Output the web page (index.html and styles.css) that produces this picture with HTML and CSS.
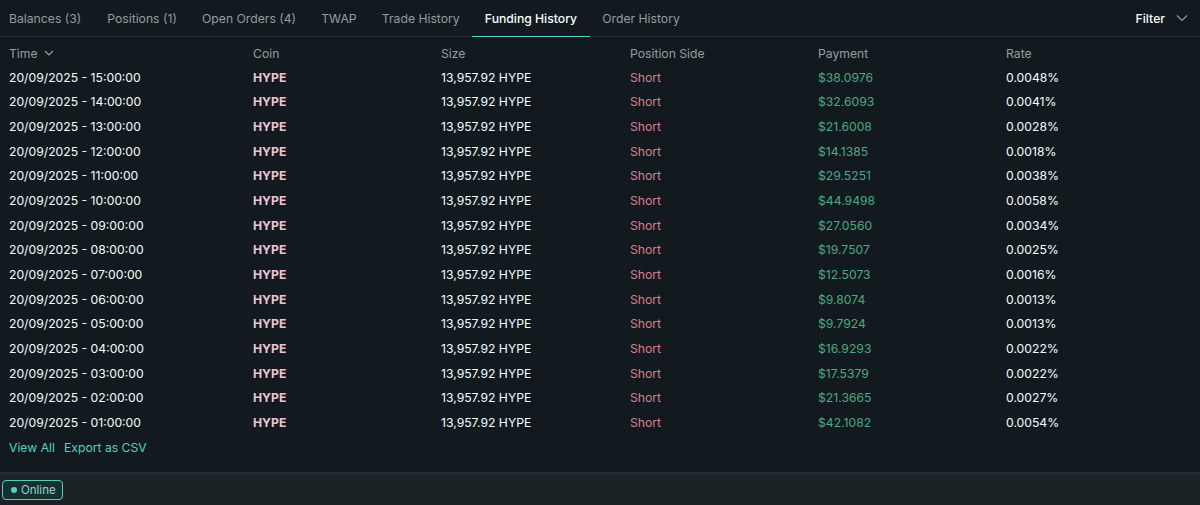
FILE: index.html
```html
<!DOCTYPE html>
<html>
<head>
<meta charset="utf-8">
<link rel="stylesheet" href="styles.css">
</head>
<body>
<div class="panel">
  <div class="tabs">
    <div class="tab">Balances (3)</div>
    <div class="tab">Positions (1)</div>
    <div class="tab">Open Orders (4)</div>
    <div class="tab">TWAP</div>
    <div class="tab">Trade History</div>
    <div class="tab active">Funding History</div>
    <div class="tab">Order History</div>
    <div class="spacer"></div>
    <div class="filter">Filter <svg class="chev" width="12" height="8" viewBox="0 0 12 8"><path d="M1 1.5 L6 6.5 L11 1.5" fill="none" stroke="#949e9c" stroke-width="1.1"/></svg></div>
  </div>
  <div class="table">
    <div class="row head">
      <div>Time <svg class="chev small" width="10" height="6" viewBox="0 0 10 6"><path d="M1 1 L5 5 L9 1" fill="none" stroke="#949e9c" stroke-width="1.2"/></svg></div>
      <div>Coin</div><div>Size</div><div>Position Side</div><div>Payment</div><div>Rate</div>
    </div>
    <div class="row"><div>20/09/2025 - 15:00:00</div><div class="coin">HYPE</div><div>13,957.92 HYPE</div><div class="short">Short</div><div class="pay">$38.0976</div><div>0.0048%</div></div>
    <div class="row"><div>20/09/2025 - 14:00:00</div><div class="coin">HYPE</div><div>13,957.92 HYPE</div><div class="short">Short</div><div class="pay">$32.6093</div><div>0.0041%</div></div>
    <div class="row"><div>20/09/2025 - 13:00:00</div><div class="coin">HYPE</div><div>13,957.92 HYPE</div><div class="short">Short</div><div class="pay">$21.6008</div><div>0.0028%</div></div>
    <div class="row"><div>20/09/2025 - 12:00:00</div><div class="coin">HYPE</div><div>13,957.92 HYPE</div><div class="short">Short</div><div class="pay">$14.1385</div><div>0.0018%</div></div>
    <div class="row"><div>20/09/2025 - 11:00:00</div><div class="coin">HYPE</div><div>13,957.92 HYPE</div><div class="short">Short</div><div class="pay">$29.5251</div><div>0.0038%</div></div>
    <div class="row"><div>20/09/2025 - 10:00:00</div><div class="coin">HYPE</div><div>13,957.92 HYPE</div><div class="short">Short</div><div class="pay">$44.9498</div><div>0.0058%</div></div>
    <div class="row"><div>20/09/2025 - 09:00:00</div><div class="coin">HYPE</div><div>13,957.92 HYPE</div><div class="short">Short</div><div class="pay">$27.0560</div><div>0.0034%</div></div>
    <div class="row"><div>20/09/2025 - 08:00:00</div><div class="coin">HYPE</div><div>13,957.92 HYPE</div><div class="short">Short</div><div class="pay">$19.7507</div><div>0.0025%</div></div>
    <div class="row"><div>20/09/2025 - 07:00:00</div><div class="coin">HYPE</div><div>13,957.92 HYPE</div><div class="short">Short</div><div class="pay">$12.5073</div><div>0.0016%</div></div>
    <div class="row"><div>20/09/2025 - 06:00:00</div><div class="coin">HYPE</div><div>13,957.92 HYPE</div><div class="short">Short</div><div class="pay">$9.8074</div><div>0.0013%</div></div>
    <div class="row"><div>20/09/2025 - 05:00:00</div><div class="coin">HYPE</div><div>13,957.92 HYPE</div><div class="short">Short</div><div class="pay">$9.7924</div><div>0.0013%</div></div>
    <div class="row"><div>20/09/2025 - 04:00:00</div><div class="coin">HYPE</div><div>13,957.92 HYPE</div><div class="short">Short</div><div class="pay">$16.9293</div><div>0.0022%</div></div>
    <div class="row"><div>20/09/2025 - 03:00:00</div><div class="coin">HYPE</div><div>13,957.92 HYPE</div><div class="short">Short</div><div class="pay">$17.5379</div><div>0.0022%</div></div>
    <div class="row"><div>20/09/2025 - 02:00:00</div><div class="coin">HYPE</div><div>13,957.92 HYPE</div><div class="short">Short</div><div class="pay">$21.3665</div><div>0.0027%</div></div>
    <div class="row"><div>20/09/2025 - 01:00:00</div><div class="coin">HYPE</div><div>13,957.92 HYPE</div><div class="short">Short</div><div class="pay">$42.1082</div><div>0.0054%</div></div>
  </div>
  <div class="links"><span>View All</span><span>Export as CSV</span></div>
</div>
<div class="statusbar">
  <div class="online"><span class="dot"></span>Online</div>
</div>
</body>
</html>
```

FILE: styles.css
```css
* { box-sizing: border-box; }
html, body { margin: 0; padding: 0; }
body {
  width: 1200px;
  height: 505px;
  background: #1b2326;
  font-family: Inter, "Noto Sans", sans-serif;
  font-size: 12.2px;
  color: #f6fefd;
  overflow: hidden;
}
.panel {
  background: #121a1f;
  height: 475px;
  border-bottom: 3px solid #232b2f;
}
.tabs {
  display: flex;
  align-items: stretch;
  height: 37px;
  border-bottom: 1px solid #273035;
}
.tab {
  display: flex;
  align-items: center;
  padding: 0 12.6px;
  color: #949e9c;
  border-bottom: 1px solid transparent;
  margin-bottom: -1px;
}
.tab:first-child { padding-left: 9px; padding-right: 13.5px; }
.tab.active {
  color: #f6fefd;
  font-weight: 500;
  border-bottom: 1px solid #50d2c1;
}
.spacer { flex: 1; }
.filter {
  display: flex;
  align-items: center;
  gap: 11px;
  padding-right: 12px;
  color: #f6fefd;
  font-weight: 500;
}
.table { padding-left: 9px; }
.row {
  display: grid;
  grid-template-columns: 244px 188px 189px 188px 188px 188px;
  height: 24.65px;
  align-items: center;
  white-space: nowrap;
}
.row.head {
  color: #949e9c;
  height: 28px;
  padding-top: 4px;
}
.row.head > div { display: flex; align-items: center; gap: 6px; }
.coin { font-weight: 700; color: #ebc4d2; }
.short { color: #d97d90; }
.pay { color: #4ea881; }
.links {
  display: flex;
  gap: 9px;
  padding-left: 9px;
  height: 26px;
  align-items: center;
  color: #50d2c1;
}
.statusbar {
  height: 30px;
  display: flex;
  align-items: center;
  padding-left: 2px;
}
.online {
  display: flex;
  align-items: center;
  gap: 4px;
  height: 20px;
  padding: 0 6px 0 8px;
  border: 1px solid #50d2c1;
  border-radius: 4px;
  background: #15302f;
  color: #94d7c9;
  font-size: 11.5px;
}
.dot {
  width: 6px; height: 6px; border-radius: 50%;
  background: #50d2c1;
}
```
